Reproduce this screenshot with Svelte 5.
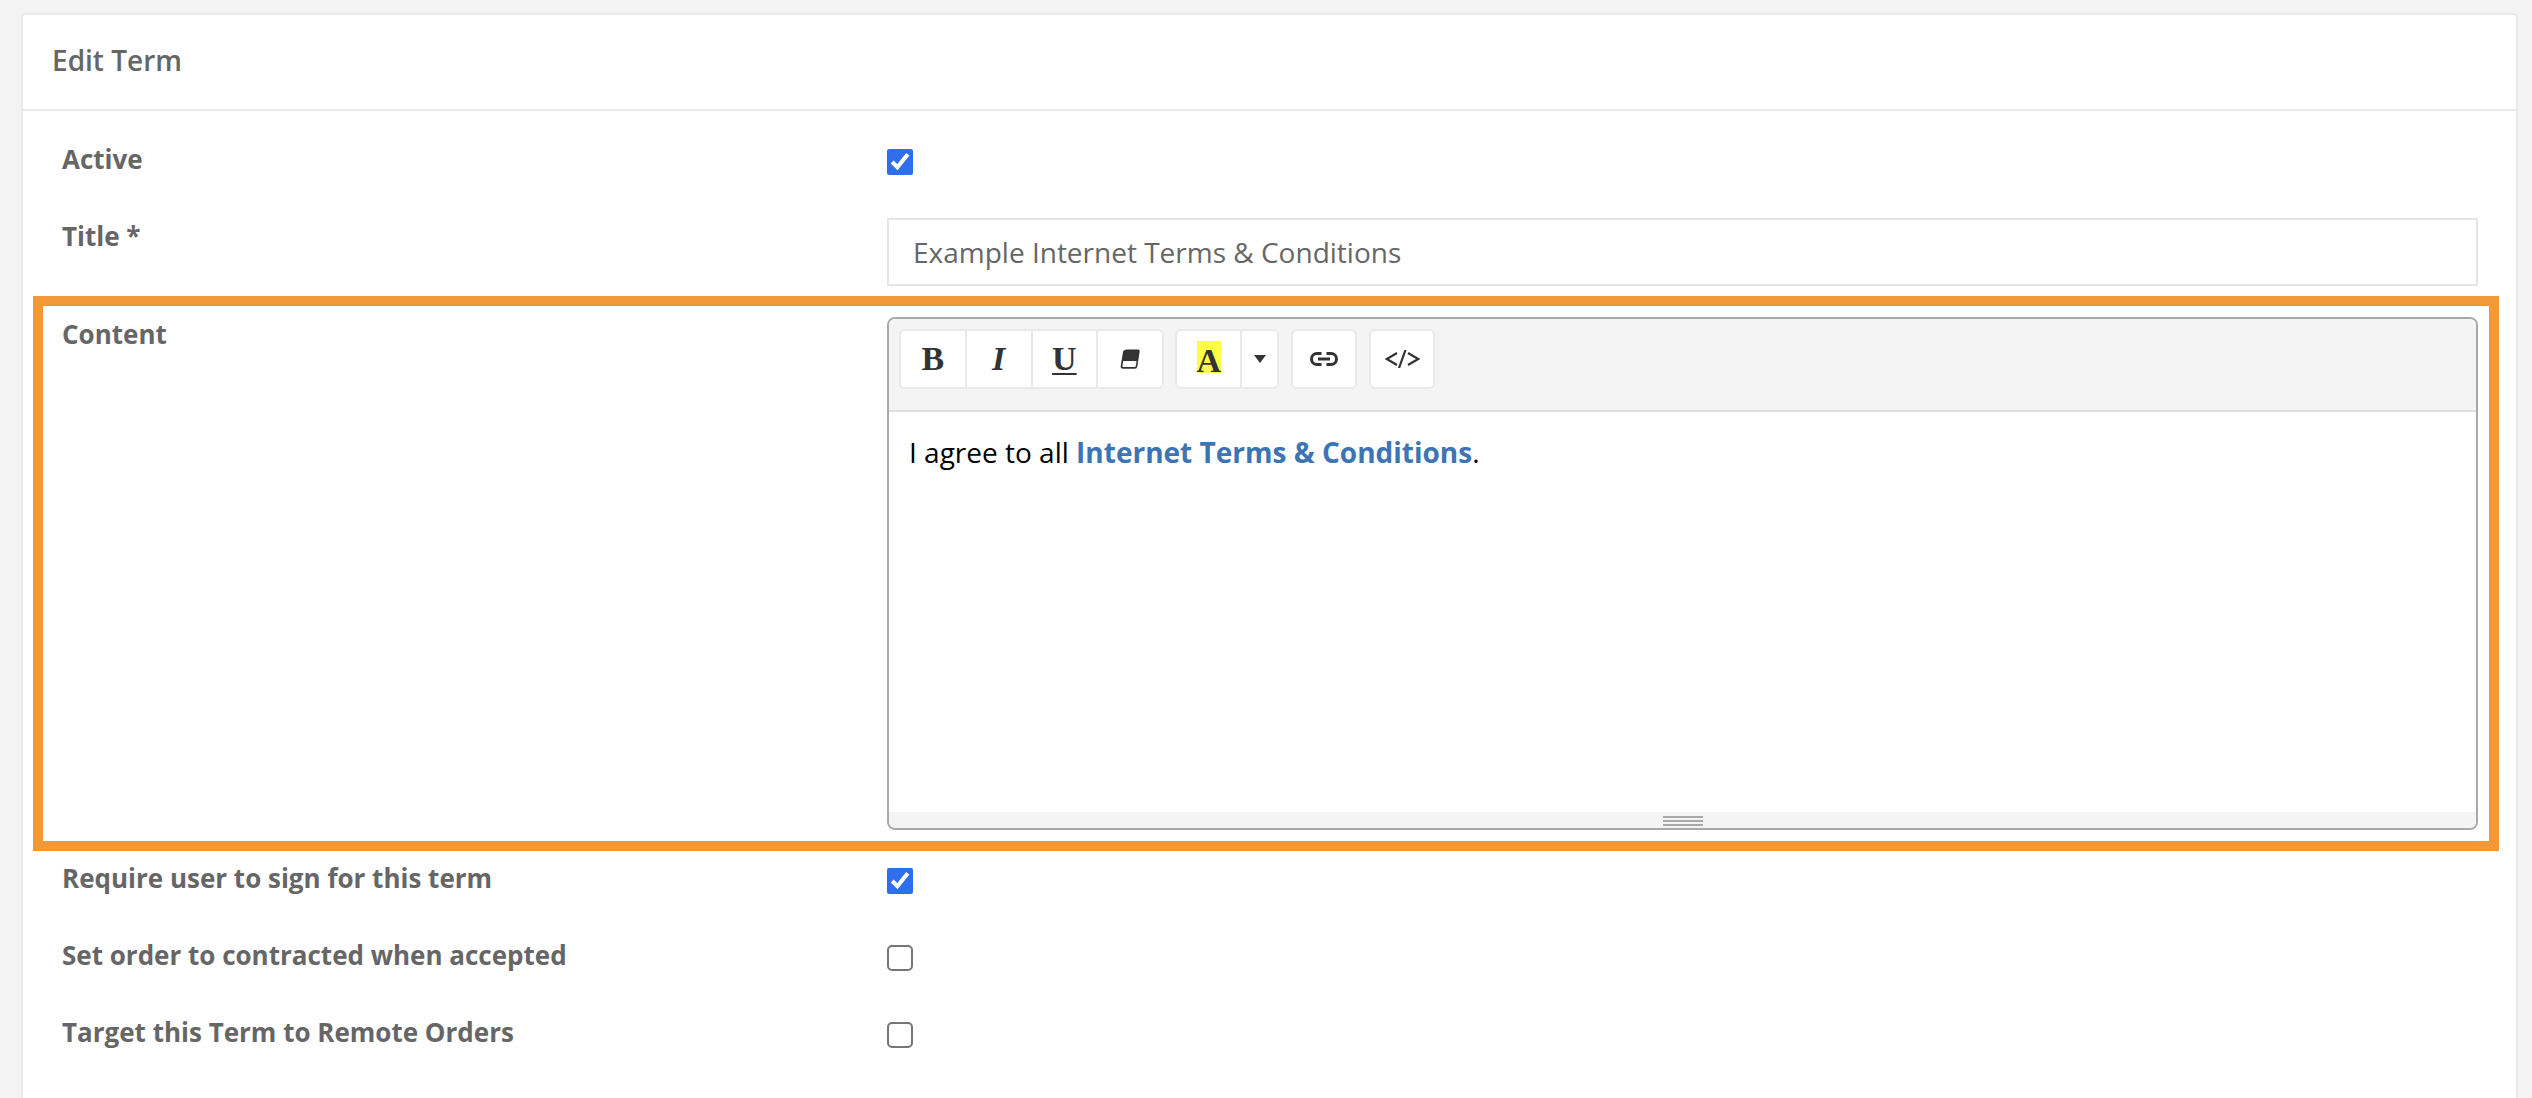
<script lang="ts">
	const checks = [
		{ label: 'Require user to sign for this term', checked: true },
		{ label: 'Set order to contracted when accepted', checked: false },
		{ label: 'Target this Term to Remote Orders', checked: false }
	];
</script>

<div class="page">
	<div class="card">
		<div class="card_header">Edit Term</div>
		<div class="card_body">
			<div class="row check_row active_row">
				<div class="label">Active</div>
				<div><input class="check" type="checkbox" checked /></div>
			</div>
			<div class="row title_row">
				<div class="label">Title *</div>
				<div><input class="text" type="text" value="Example Internet Terms &amp; Conditions" /></div>
			</div>
			<div class="row content_row">
				<div class="label">Content</div>
				<div class="editor">
					<div class="toolbar">
						<div class="btn_group style_group">
							<button class="btn serif"><b>B</b></button>
							<button class="btn serif"><b><i>I</i></b></button>
							<button class="btn serif"><b><u>U</u></b></button>
							<button class="btn" aria-label="Remove format">
								<svg width="20" height="20" viewBox="0 0 20 20">
									<path d="M7 .5h11q2 0 1.7 2l-2.4 15q-.3 2.2-2.4 2.2H3q-2.6 0-2.3-2.6L3 3q.4-2.5 4-2.5z" fill="#333" />
									<path d="M3.2 12h13.4l-.8 5q-.2 1-1.2 1H3.3q-1.1 0-.9-1.1z" fill="#fff" />
								</svg>
							</button>
						</div>
						<div class="btn_group">
							<button class="btn serif"><b class="marker">A</b></button>
							<button class="btn caret_btn" aria-label="More colors"><span class="caret"></span></button>
						</div>
						<div class="btn_group">
							<button class="btn" aria-label="Link">
								<svg width="28" height="14" viewBox="0 0 28 14" fill="none" stroke="#333" stroke-width="3">
									<path d="M11.5 1.5H7a5.5 5.5 0 0 0 0 11h4.5M16.5 1.5H21a5.5 5.5 0 0 1 0 11h-4.5M8 7h12" />
								</svg>
							</button>
						</div>
						<div class="btn_group">
							<button class="btn" aria-label="Code view">
								<svg width="35" height="18" viewBox="0 0 35 18" fill="none" stroke="#333" stroke-width="2.2">
									<path d="M12 3 1.8 9 12 15M20.5 0 14 18M23 3 33.2 9 23 15" />
								</svg>
							</button>
						</div>
					</div>
					<div class="editable">
						I agree to all <a href="#terms">Internet Terms &amp; Conditions</a>.
					</div>
					<div class="statusbar">
						<div class="grip"></div>
					</div>
				</div>
			</div>
			{#each checks as item}
				<div class="row check_row">
					<div class="label">{item.label}</div>
					<div><input class="check" type="checkbox" checked={item.checked} /></div>
				</div>
			{/each}
		</div>
	</div>
</div>

<style>
	:global(body) {
		margin: 0;
		background: #f3f3f3;
	}
	.page {
		height: 1098px;
		overflow: hidden;
		padding: 13px 14px 0 21px;
		box-sizing: border-box;
		font-family: 'Open Sans', sans-serif;
		color: #666;
	}
	.card {
		background: #fff;
		border: 2px solid #e9e9ea;
		border-radius: 4px;
		height: 1200px;
	}
	.card_header {
		height: 94px;
		line-height: 90px;
		padding-left: 29px;
		font-size: 28px;
		font-weight: 600;
		border-bottom: 2px solid #e9e9ea;
	}
	.card_body {
		padding: 30px 38px 0 39px;
	}
	.row {
		display: grid;
		grid-template-columns: 825px 1fr;
	}
	.label {
		font-size: 26px;
		line-height: 36px;
		font-weight: 700;
	}
	.check_row {
		margin-bottom: 41px;
	}
	.active_row {
		margin-bottom: 40px;
	}
	.check {
		display: block;
		width: 26px;
		height: 26px;
		margin: 8px 0 0;
		accent-color: #2f6fed;
	}
	.check:not(:checked) {
		appearance: none;
		box-sizing: border-box;
		border: 2px solid #767676;
		border-radius: 5px;
		background: #fff;
	}
	.title_row {
		margin-bottom: 10px;
	}
	.title_row .label,
	.content_row .label {
		margin-top: 1px;
	}
	.text {
		display: block;
		width: 100%;
		height: 68px;
		margin-top: 1px;
		box-sizing: border-box;
		border: 2px solid #e5e5e5;
		padding: 0 24px;
		font: 28px 'Open Sans', sans-serif;
		color: #666;
		outline: none;
	}
	.content_row {
		margin: 0 -21px 9px -29px;
		border: 10px solid #f19937;
		padding: 9px 11px 11px 19px;
	}
	.editor {
		margin-top: 2px;
		border: 2px solid #a9a9a9;
		border-radius: 8px;
		overflow: hidden;
	}
	.toolbar {
		display: flex;
		gap: 12px;
		height: 93px;
		box-sizing: border-box;
		padding: 10px;
		background: #f4f4f4;
		border-bottom: 2px solid #e0e0e0;
	}
	.btn_group {
		display: flex;
		height: 60px;
		box-sizing: border-box;
		border: 2px solid #e9e9ea;
		border-radius: 6px;
		background: #fff;
		overflow: hidden;
	}
	.style_group {
		width: 265px;
		margin-right: -1px;
	}
	.style_group .btn {
		flex: 1;
	}
	.btn {
		display: flex;
		align-items: center;
		justify-content: center;
		width: 65px;
		padding: 0;
		border: 0;
		border-right: 2px solid #e9e9ea;
		background: #fff;
		color: #333;
	}
	.btn:last-child {
		border-right: 0;
	}
	.btn:only-child {
		width: 62px;
	}
	.serif {
		font-family: 'Liberation Serif', serif;
		font-size: 34px;
	}
	.serif u {
		text-decoration-thickness: 2px;
		text-underline-offset: 3px;
	}
	.marker {
		display: block;
		width: 24px;
		height: 32px;
		margin-bottom: 4px;
		line-height: 39px;
		background: #ff4;
	}
	.caret_btn {
		width: 35px;
	}
	.caret {
		width: 0;
		height: 0;
		border: 6px solid transparent;
		border-top: 8px solid #333;
		border-bottom: 0;
	}
	.editable {
		height: 400px;
		box-sizing: border-box;
		padding: 22px 20px 0;
		font-size: 28px;
		line-height: 36px;
		color: #000;
	}
	.editable a {
		color: #3d74b3;
		font-weight: 700;
		text-decoration: none;
	}
	.statusbar {
		display: flex;
		justify-content: center;
		height: 16px;
		box-sizing: border-box;
		padding-top: 4px;
		background: #f4f4f4;
	}
	.grip {
		width: 40px;
		height: 10px;
		background: repeating-linear-gradient(#a9a9a9 0 2px, transparent 2px 4px);
	}
</style>
